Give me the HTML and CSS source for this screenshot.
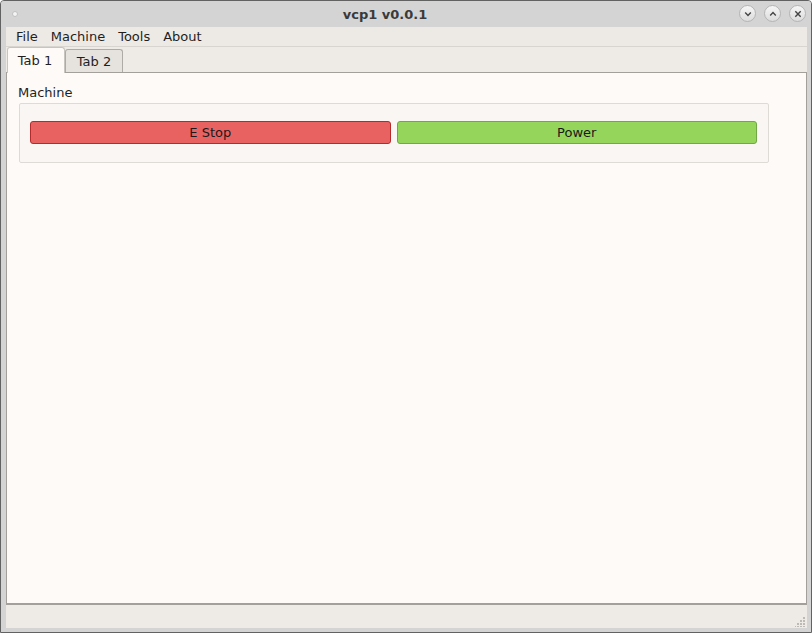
FILE: index.html
```html
<!DOCTYPE html>
<html>
<head>
<meta charset="utf-8">
<link rel="stylesheet" href="styles.css">
</head>
<body>
<div class="window">
  <div class="titlebar">
    <span class="app-dot"></span>
    <span class="title">vcp1 v0.0.1</span>
    <div class="wm-buttons">
      <span class="wm-btn"><svg width="8" height="8" viewBox="0 0 8 8"><path d="M1.2 2.6 L4 5.4 L6.8 2.6" fill="none" stroke="#444" stroke-width="1.4"/></svg></span>
      <span class="wm-btn"><svg width="8" height="8" viewBox="0 0 8 8"><path d="M1.2 5.4 L4 2.6 L6.8 5.4" fill="none" stroke="#444" stroke-width="1.4"/></svg></span>
      <span class="wm-btn"><svg width="8" height="8" viewBox="0 0 8 8"><path d="M1.3 1.3 L6.7 6.7 M6.7 1.3 L1.3 6.7" fill="none" stroke="#444" stroke-width="1.4"/></svg></span>
    </div>
  </div>
  <div class="client">
    <div class="menubar">
      <span class="menu-item">File</span>
      <span class="menu-item">Machine</span>
      <span class="menu-item">Tools</span>
      <span class="menu-item">About</span>
    </div>
    <div class="tabbar">
      <span class="tab tab-active">Tab 1</span>
      <span class="tab">Tab 2</span>
    </div>
    <div class="panel">
      <div class="group-label">Machine</div>
      <div class="group">
        <button class="btn btn-estop">E Stop</button>
        <button class="btn btn-power">Power</button>
      </div>
    </div>
    <div class="statusbar">
      <svg class="grip" width="10" height="10" viewBox="0 0 10 10">
        <g fill="#bdbab6">
          <rect x="8" y="0" width="2" height="2"/>
          <rect x="5" y="3" width="2" height="2"/><rect x="8" y="3" width="2" height="2"/>
          <rect x="2" y="6" width="2" height="2"/><rect x="5" y="6" width="2" height="2"/><rect x="8" y="6" width="2" height="2"/>
          <rect x="-1" y="9" width="2" height="2"/><rect x="2" y="9" width="2" height="2"/><rect x="5" y="9" width="2" height="2"/><rect x="8" y="9" width="2" height="2"/>
        </g>
      </svg>
    </div>
  </div>
</div>
</body>
</html>
```

FILE: styles.css
```css
* { box-sizing: border-box; }
html, body {
  margin: 0;
  padding: 0;
  background: #ffffff;
  font-family: "DejaVu Sans", "Liberation Sans", sans-serif;
  font-size: 13px;
  color: #1f1f1f;
}
.window {
  width: 812px;
  height: 633px;
  border: 1px solid #626262;
  border-radius: 4px 4px 0 0;
  background: #d4d4d4;
  display: flex;
  flex-direction: column;
  overflow: hidden;
}
.titlebar {
  height: 26px;
  flex: 0 0 26px;
  position: relative;
  display: flex;
  align-items: center;
  justify-content: center;
  background: #d4d4d4;
}
.app-dot {
  position: absolute;
  left: 11px;
  top: 10px;
  width: 6px;
  height: 6px;
  border-radius: 50%;
  background: #f4f4f4;
  border: 1px solid #c0c0c0;
}
.title {
  font-weight: bold;
  font-size: 13px;
  color: #3a3a3a;
  margin-right: 42px;
}
.wm-buttons {
  position: absolute;
  right: 5px;
  top: 4px;
  display: flex;
  gap: 8px;
}
.wm-btn {
  width: 17px;
  height: 17px;
  border-radius: 50%;
  border: 1px solid #b4b4b4;
  background: linear-gradient(#f6f6f6, #dcdcdc);
  display: flex;
  align-items: center;
  justify-content: center;
}
.client {
  flex: 1;
  margin: 0 4px 4px 5px;
  display: flex;
  flex-direction: column;
  background: #eeebe7;
}
.menubar {
  height: 20px;
  flex: 0 0 20px;
  display: flex;
  align-items: center;
  padding-left: 3.5px;
  border-bottom: 1px solid #d8d5d1;
  background: #edeae6;
}
.menu-item {
  padding: 0 6.5px;
  line-height: 18px;
}
.tabbar {
  height: 25px;
  flex: 0 0 25px;
  display: flex;
  align-items: flex-end;
  padding-left: 1px;
  position: relative;
  z-index: 1;
}
.tab {
  height: 23px;
  width: 58px;
  display: flex;
  align-items: center;
  justify-content: center;
  border: 1px solid #aeaba7;
  border-bottom: none;
  border-radius: 3px 3px 0 0;
  background: #e6e3df;
}
.tab-active {
  height: 26px;
  margin-bottom: -1px;
  background: #fdfaf7;
  border-color: #c8c5c1;
  padding-bottom: 1px;
  padding-right: 2px;
}
.panel {
  flex: 1;
  background: #fdfaf7;
  border: 1px solid #a3a09c;
  border-bottom: 2px solid #a3a09c;
  padding: 12px 37px 0 11px;
}
.group-label {
  line-height: 16px;
  margin-bottom: 2px;
}
.group {
  display: flex;
  gap: 6px;
  border: 1px solid #dedbd7;
  border-radius: 2px;
  background: #f9f6f3;
  padding: 17px 11px 18px 10px;
  margin-left: 1px;
}
.btn {
  flex: 1;
  height: 23px;
  font-family: "DejaVu Sans", "Liberation Sans", sans-serif;
  font-size: 13px;
  color: #1a1a1a;
  border-radius: 3px;
  padding: 0;
}
.btn-estop {
  background: #e96262;
  border: 1px solid #b52a2a;
}
.btn-power {
  background: #96d55b;
  border: 1px solid #6fa844;
}
.statusbar {
  height: 23px;
  flex: 0 0 23px;
  background: #eeebe7;
  position: relative;
}
.grip {
  position: absolute;
  right: 2px;
  bottom: 1px;
}
```
